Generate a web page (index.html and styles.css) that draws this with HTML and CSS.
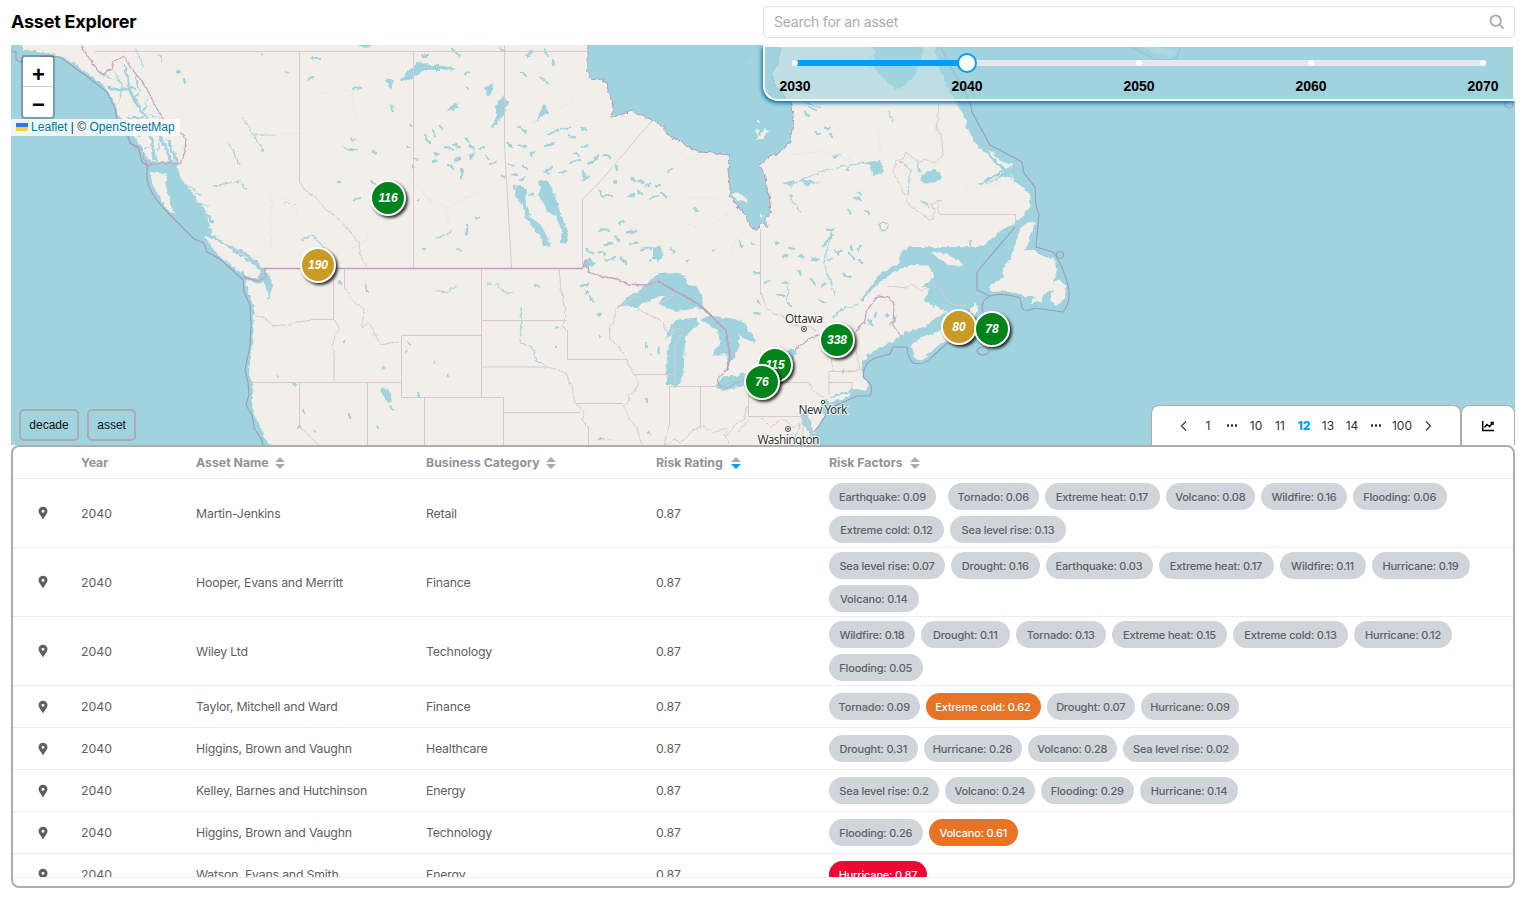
FILE: index.html
```html
<!DOCTYPE html>
<html lang="en">
<head>
<meta charset="utf-8">
<title>Asset Explorer</title>
<link rel="stylesheet" href="styles.css">
</head>
<body>
<svg class="defs" width="0" height="0" aria-hidden="true">
  <symbol id="pin" viewBox="0 0 10 14"><path fill-rule="evenodd" d="M5 .8a4.5 4.5 0 0 0-4.5 4.5C.5 8 3.300 9.600 4.200 12.300Q5 13.600 5.800 12.300C6.700 9.600 9.500 8 9.500 5.300A4.500 4.500 0 0 0 5 .8zM5 3.800a1.500 1.500 0 1 1 0 3a1.500 1.500 0 0 1 0-3z"/></symbol>
  <symbol id="sort" viewBox="0 0 10 12"><path class="up" d="M5 0L10 5H0z"/><path class="down" d="M5 12L0 7H10z"/></symbol>
</svg>
<main class="app">
  <header class="top">
    <h1 class="title">Asset Explorer</h1>
    <label class="search"><span>Search for an asset</span>
      <svg width="16" height="16" viewBox="0 0 16 16"><circle cx="6.700" cy="6.700" r="5.200"/><path d="M10.600 10.600L14.600 14.600"/></svg>
    </label>
  </header>
  <section class="map">
    <svg class="tiles" width="1504" height="400" viewBox="11 45 1504 400">
      <defs>
        <filter id="rough" x="0" y="0" width="1" height="1" color-interpolation-filters="sRGB"><feTurbulence type="fractalNoise" baseFrequency=".2" numOctaves="2" seed="4"/><feDisplacementMap in="SourceGraphic" scale="5" xChannelSelector="R" yChannelSelector="G"/></filter>
        <filter id="wiggle" x="0" y="0" width="1" height="1" color-interpolation-filters="sRGB"><feTurbulence type="fractalNoise" baseFrequency=".18" numOctaves="2" seed="9"/><feDisplacementMap in="SourceGraphic" scale="4" xChannelSelector="R" yChannelSelector="G"/></filter>
      </defs>
      <g class="land" filter="url(#rough)">
        <path d="M18 35L24 50L45 52L57 55L68 60L75 63L85 72L97 80L105 86L110 95L115 103L118 115L127 122L133 135L140 145L145 155L152 162L163 163L175 160L178 170L182 182L190 190L195 200L204 212L210 225L212 235L225 243L238 250L245 258L255 262L264 268L268 275L273 283L272 290L268 301L268 292L264 282L258 284L246 280L248 293L253 305L254 315L253 330L252 345L250 360L249 375L252 382L252 395L251 405L254 415L258 423L265 437L274 450H813L810 434L803 424L800 415L806 410L811 422L814 434L820 425L824 415L822 405L824 400L838 398L853 393L838 396L827 398L845 391L857 389L865 391L869 386L866 380L862 377L861 370L863 362L868 355L876 350L885 345L900 338L905 332L915 330L925 326L935 318L942 313L937 310L930 304L924 300L930 288L920 286L905 286L918 287L930 282L934 273L928 266L915 265L900 269L888 276L877 285L868 295L858 304L866 298L872 288L880 277L890 268L898 264L900 256L903 250L910 247L930 247L950 247L975 247L985 245L1000 231L1015 223L1024 215L1030 205L1031 195L1022 187L1013 180L1012 174L1000 178L985 184L1000 176L1012 168L1014 165L1000 161L992 152L978 148L973 138L967 128L965 115L957 106L953 98L946 85L938 65L932 35H928L921 58L915 75L905 85L895 90L884 78L875 70L873 35H785L778 60L772 75L775 85L785 97L792 105L794 125L791 140L783 150L765 160L759 164L764 172L766 183L769 195L771 212L766 218L768 228L762 222L757 230L751 228L745 215L738 207L730 196L730 185L728 170L729 155L715 153L698 152L688 147L680 141L670 137L663 127L652 120L640 115L632 111L620 115L611 117L613 108L610 95L604 79L591 80L587 72V35Z"/>
        <path d="M204 236L212 238L225 245L240 256L252 263L260 272L258 279L245 275L230 264L216 253Z M150 172L167 174L165 187L171 203L175 215L167 209L158 195L152 183Z M1020 230Q1026 220 1035 223L1030 238L1024 250L1034 250L1042 256L1054 259L1057 270L1053 282L1060 280L1066 286L1065 298L1056 306L1050 301L1053 290L1044 294L1042 302L1030 303L1036 296L1025 296L1010 291L990 292L990 286L1003 278L1002 268L1010 260Z M931 252L945 254L958 260L963 266L948 265L938 258Z M975 303L979 306L976 316L969 320L971 308Z M935 303L939 308L948 312L940 315L934 310Z M911 348L916 340L927 336L940 331L952 326L958 330L950 340L940 344L930 352L922 361L916 359Z M825 400L850 392L852 395L833 402Z"/>
        <path d="M731 195L738 192L746 198L747 202L738 201Z M755 131L759 127L758 137Z M757 119L761 123L757 122Z M765 128L769 132L762 139L757 139Z M749 65L757 53L750 63Z M754 190L756 196Z M761 213L765 216L761 217Z M126 80L130 95L124 90Z"/>
      </g>
      <g class="water" filter="url(#rough)">
        <path d="M617 308L628 297L640 290L650 281L660 273L675 272L683 274L688 285L698 288L703 299L702 310L695 308L685 310L675 311L663 305L658 303L667 295L655 297L645 303L637 308L628 305Z"/>
        <path d="M675 326L672 334L664 341L667 335L671 325L680 319L695 318L700 323L692 328L685 340L684 365L681 381L675 387L667 384L666 366L669 345Z"/>
        <path d="M700 319L713 316L735 319L745 323L750 332L757 342L748 341L738 334L740 345L734 358L728 365L726 354L712 356L715 349L720 344L718 331L708 324Z"/>
        <path d="M716 385L724 376L735 376L745 372H752V383L735 388L722 391Z M760 362L775 354L792 349L797 352L792 360L770 365Z"/>
        <path d="M538 180L548 180L555 195L560 212L565 225L568 235L566 243L561 243L562 230L556 216L548 212L543 202L537 195L540 190Z M517 185L527 190L526 202L531 218L541 225L549 240L550 246L543 246L540 235L530 224L524 208L516 198Z"/>
        <path d="M400 81L408 71L420 61L428 65L440 65L458 69L440 70L425 70L410 80Z M503 95L509 101L504 113L496 125L491 128L497 115L495 107Z M653 248L660 246L664 255L658 262L653 258Z M485 88L494 83L491 95L486 97Z M446 110L457 102L458 108L449 111Z M535 122L544 103L548 112L538 120L530 124Z M468 155L476 152L470 160Z M380 390L388 388L393 400L387 403Z M385 78L394 80L390 89Z M342 147L359 149L350 152Z M582 264L590 257L596 264L585 268Z M920 177L935 168L944 178L932 183L922 182Z M868 162L880 160L884 172L873 176Z M782 183L795 180L790 186Z M800 180L820 182L806 186Z M833 156L843 153L835 159Z M845 170L850 166L848 172Z"/>
      </g>
      <g class="streams" filter="url(#rough)">
        <path stroke-width="2.600" d="M125 65L130 92L142 112L155 130L165 145L172 165 M110 88L120 90L135 88 M128 118L142 118 M138 135L150 130L155 160 M168 140L178 165 M212 222L190 192L180 180 M240 250L258 265 M265 270L271 288 M883 272L862 300 M944 62L975 140L1012 178 M980 184L1010 168"/>
        <path stroke-width="1.200" d="M115 72L122 86L119 103 M136 76L140 92L132 98 M148 100L143 112L160 118 M120 128L130 135 M136 150L148 148 M162 125L158 150 M100 72L112 80 M136 50L142 62V68 M158 55L162 61 M175 180L195 190 M183 196L202 194 M188 205L208 205 M243 119L254 135L264 152 M254 135L276 135 M229 144L240 165 M213 186L240 181L246 190 M312 235L324 247L328 275 M285 203L296 204 M301 240L312 235 M437 292L449 291L455 287 M487 284L498 285L505 293L513 293 M521 308L522 328L520 342L533 348L535 358L545 366 M436 238L450 233L452 230 M823 263L833 228 M858 304L840 310L833 318 M825 265L835 295 M788 285L787 305 M798 100L820 108 M888 112L893 122 M790 185L820 172L850 165L875 162 M790 195L800 213 M900 160L910 170L908 195 M917 160L920 172 M921 200L930 208 M870 55L871 70 M800 424L796 437 M809 420L812 430"/>
        <path class="thin" d="M552 110L570 104L575 95 M413 182L430 200L447 208L480 190 M680 155L695 160L697 152 M688 198L718 198L732 195 M680 220L703 231L725 216L738 210 M730 260L735 240L750 230 M270 250L272 195L290 200L297 215 M318 94L350 90L357 120 M265 135L290 133L310 134 M350 250L365 240L372 225 M878 130L880 150 M965 190L1000 183 M790 155L820 150L850 160 M448 225L446 208"/>
        <path class="ponds" d="M313 57l6 2 M360 46l10-1 M308 79l5-1 M353 88l8 0 M285 72l2 0 M262 54l1 0 M392 106l1 5 M352 140l3 0 M373 152l4 1 M372 181l3 3 M338 182l2 0 M355 200l5-2 M184 79l1 4 M178 71l2 1 M422 56l6-1 M452 49l8 7 M500 48l4 4 M527 56l5-4 M545 50l3 7 M552 60l2 4 M465 75l4-4 M467 87l1 2 M540 76l8 8 M522 74l4 1 M425 135l5 8 M432 130l3 7 M440 126l2 3 M410 125l2 2 M407 147l1 0 M415 158l3 2 M412 166l2 1 M435 154l4 0 M445 147l8 3 M453 144l7 4 M448 165l5 4 M462 170v8 M432 162l4-2 M455 160l5-1 M480 149l4-2 M486 156l3 3 M490 164l5-2 M501 176l3 1 M510 164l4 2 M512 174l6 1 M523 166l4 3 M520 180l4-2 M470 145l5 5 M465 138l4 4 M507 143l5 4 M519 145l7 2 M520 127l5 5 M531 154l3-2 M545 146l8-2 M549 134l9-4 M562 129l7-2 M581 128l6 1 M569 136l5 2 M583 147l4-1 M575 153l3 3 M570 163l9-3 M582 180l7-3 M588 164l8-4 M595 159l3-4 M603 155l7 2 M560 172l5 0 M545 171l4 2 M525 210l2 10 M520 197l5 3 M530 195l3 0 M515 186l1 8 M548 170l4-3 M583 172l2 8 M605 196l7 0 M600 191l2 5 M616 166l1 3 M614 182l2 0 M632 179l3 1 M639 181l5 1 M646 186l3-1 M656 186l4-1 M629 196l5-1 M638 191l3 3 M650 198l8-3 M661 193l6 4 M668 171l3-1 M695 209l2 2 M476 217l4 1 M417 201l1 0 M467 225v9 M457 249l4 1 M423 249l2 0 M599 232l2-2 M603 229l5 2 M605 245l8-2 M614 236l5 4 M600 252l5 2 M587 250l6 3 M606 260l9-2 M621 258l5 5 M627 232l9-1 M630 244l8-2 M619 224l4-3 M641 250l9-2 M670 248l4 4 M648 262l3-2 M687 261l2 0 M713 250l2 0 M740 242l2 4 M752 243l3 1 M754 273l6 0 M755 313l5 1 M765 283l4-2 M783 282l5 1 M797 270l4 5 M811 280l4 4 M822 287l3-4 M843 274l7 3 M851 247l1 2 M858 250l3-4 M860 260l2 3 M850 254l4 5 M835 250l3 4 M812 260l7-1 M800 256l3 2 M778 295l5 1 M788 303l3 3 M757 300l4 4 M820 300l4 2 M832 235l-7 7 M823 248l2-4 M790 248l4 1 M775 243l3 0 M783 257l3-2 M810 108l6 2 M825 128l5 0 M815 132l5 2 M830 134l3 3 M805 113l4 3 M866 211l3 3 M855 198l5 1 M858 192l3 2 M848 210l3 4 M828 230l5 0 M828 260l3-1 M838 253l4-1 M581 286l7-2 M589 297l4 4 M597 315l4 0 M599 316l1-1 M586 292l2 0 M535 285l5 2 M556 329l2-1 M556 346v1 M600 336h1 M339 282l2 2 M366 285l1 5 M344 341h1 M277 376l1 1 M294 383l1 2 M304 411l1 2 M299 426l1 1 M314 431h1 M349 415v2 M377 428h1 M391 407l2 3 M383 368h1 M408 343l2 2 M406 352h1 M434 362v1 M448 375v1 M418 393l1 4 M658 347l1 6 M646 344v3 M651 355h1 M646 400v2 M649 432v1 M600 439l4 0 M610 440h1 M868 320l4 6 M875 313l1 4 M890 325l2-2 M887 314l1 1 M895 318v4 M843 370v3 M970 245l1-4"/>
        <circle class="ring" cx="883.500" cy="226" r="4.500"/>
      </g>
      <g class="borders" filter="url(#wiggle)">
        <path d="M299.500 182L307 192L318 199L325 209L340 220L352 234L359 243L361 258L368 268 M344.500 288L352 299L364 310L362 327L369 323L375 335L381 345L400 341 M255 316L266 318L272 326L290 324L311 320 M334 320L339 327L332 346L334 352 M559 269L561 290L566 315L563 325L567 332 M615 308L615 320L609 327L610 340L620 348L627 358L628 365L639 382L635 392L628 395L629 400L624 407L630 420L638 430L640 440L645 450 M637 309L650 316L662 320L667 332 M545 367L556 369L566 373L572 387L575 403L585 413L582 420L588 428 M663 450L668 430L670 423 M663 446L675 440L682 442L693 430L703 426L715 432L725 428L728 436L735 425L743 420L748 405 M725 435L732 450 M760.500 290L766 308L774 314L785 317L790 325L812 327L818 333 M761 418L771 428L781 418L795 428 M748 420L738 432 M808 382L814 391L824 398 M805 417L812 432 M831 355L833 371 M855 345L860 370L848 372 M912 284L922 292L930 284L942 290L947 302L963 306L977 291 M887 287L892 286L905 288L912 284"/>
        <path d="M939 103L937 128L942 140L943 155L936 163L928 160L918 162L906 152L902 160L897 160L893 172L903 190L909 205L920 213L932 220L935 210L930 205L942 200L936 208L941 214"/>
        <path class="state" d="M81 45L84 52L101 75L112 69L114 61L124 56L130 67L145 85L155 105L163 118V126L181 134L186 138L185 152L180 163H160L146 166L142 150L130 143L127 128 M583 268L586 261L588 272L600 276L617 279L628 284L645 285L658 281L698 304L707 312L713 318L726 330L730 358L727 370L718 379L720 386L726 388L745 379 M795 350L812 337L820 335 M856 330L864 323L867 310L878 296L890 298L894 305L893 325L902 338 M264 268L266 277L258 281L243 277"/>
      </g>
      <g class="borders" filter="url(#rough)">
        <path class="coast" d="M587 52L587 72L591 80L604 79L610 95L613 108L611 117L620 115L632 111L640 115L652 120L663 127L670 137L680 141L688 147L698 152L715 153L729 155L728 170L730 185L730 196L738 207L745 215L751 228L757 230L762 222L768 228 M782 46L778 60L772 75L775 85L785 97L792 105L794 125L791 140L783 150L765 160L759 164L764 172L766 183L769 195L771 212L766 218"/>
      </g>
      <g class="borders">
        <path d="M95 51.500H587 M299.500 52V182 M413.500 52V268 M504.500 45V145L511.500 268 M652.500 120L599 183L582.500 199V268 M333.500 269V320 M311 319.500H334 M334 350V382 M250 382.500H401 M299.500 383V427L319 445 M367.500 383V445 M344.500 269V288 M401.500 335.500H481.500V397.500H401.500Z M481.500 269V397.500H503.500V445 M481.500 320.500H567 M481.500 367H545 M424.500 397.500V445 M503.500 412.500H580 M588.500 426V445 M567.500 330V359.500H627 M575 403.500H623 M634 374.500H675 M669.500 386V425 M669 386.500H717 M700.500 386V427 M748.500 388V416.500H803V445 M780 382.500H808 M829 395V371.500H858 M829 382.500H852V392 M760.500 229V295 M941 214.500H1015.500V225 M658 304L670 298L676 289 M617 308L634 297H641 M675 382V345L684 330L675 328L667 336"/>
        <path class="maritime" d="M11 51L16 52V60L21 62L45 56L60 57L85 75L107 92L115 108L117 120L128 135L130 143L138 147L142 162L148 166C144 180 149 194 170 215L194 239L204 243L207 252L220 259L240 277L243 280L244 292L250 305L251 325L250 345L245 370L248 382L249 395L246 405L252 415L254 428L262 440L263 445 M941 47C948 68 969 90 972 112L990 145L1015 158L1022 162L1024 173L1035 187L1036 205L1039 215L1036 247L1053 252Q1062 263 1068 285Q1072 300 1063 312L1035 308Q1025 313 1022 308L1020 298Q1002 292 990 296Q978 302 984 315 M958 343L946 344L932 357Q924 366 913 363Q908 358 907 347L893 347L890 354L875 358Q861 365 864 378Q875 385 870 396L857 396L830 408L823 420L814 432 M1015 227L977 272V290L990 296"/>
        <path class="main" d="M264 268.500H583 M658 281L698 304L708 312L713 318L726 330L730 358L727 370 M243 277L258 281"/>
        <circle class="maritime" cx="1060" cy="255" r="3.500"/><ellipse class="maritime" cx="983" cy="351" rx="6" ry="4"/><circle class="maritime" cx="1509" cy="104" r="4"/><path class="maritime" d="M1128 45L1154 59L1170 60Q1181 58 1180 45"/><path class="shoal" d="M1148 46l28 7 M1150 49l20 6"/>
      </g>
      <g class="cities">
        <circle cx="804" cy="329" r="2.500"/><circle class="dot" cx="804" cy="329" r="1"/><circle cx="823" cy="402" r="1.700"/><circle cx="788" cy="429" r="2.500"/><circle class="dot" cx="788" cy="429" r="1"/>
        <text x="804" y="323" textLength="38">Ottawa</text><text x="823" y="414" textLength="49">New York</text><text x="788.500" y="444" textLength="62">Washington</text>
      </g>
    </svg>
    <div class="zoom"><span>+</span><span>−</span></div>
    <div class="credit"><svg width="12" height="8" viewBox="0 0 12 8"><path fill="#2b7ce0" d="M0 0h12v4H0z"/><path fill="#ffce3a" d="M0 4h12v4H0z"/></svg><a>Leaflet</a> | © <a>OpenStreetMap</a></div>
    <b class="marker" style="left:359px;top:135px">116</b>
    <b class="marker gold" style="left:289px;top:202px">190</b>
    <b class="marker" style="left:808px;top:277px">338</b>
    <b class="marker" style="left:746px;top:302px">115</b>
    <b class="marker" style="left:733px;top:319px">76</b>
    <b class="marker gold" style="left:930px;top:264px">80</b>
    <b class="marker" style="left:963px;top:266px">78</b>
    <div class="slider">
      <div class="track"><i class="fill"></i><i class="stop" style="left:0%"></i><i class="stop" style="left:50%"></i><i class="stop" style="left:75%"></i><i class="stop" style="left:100%"></i><i class="thumb"></i></div>
      <div class="years"><span>2030</span><span>2040</span><span>2050</span><span>2060</span><span>2070</span></div>
    </div>
    <div class="chips"><span>decade</span><span>asset</span></div>
    <div class="tabs">
      <nav class="pager"><svg width="24" height="12" viewBox="0 0 24 12"><path d="M14 1.500L9.500 6L14 10.500"/></svg><span>1</span><span class="dots"><i></i><i></i><i></i></span><span>10</span><span>11</span><span class="current">12</span><span>13</span><span>14</span><span class="dots"><i></i><i></i><i></i></span><span class="last">100</span><svg width="24" height="12" viewBox="0 0 24 12"><path d="M10 1.500L14.500 6L10 10.500"/></svg></nav>
      <div class="charttab"><svg width="14" height="12" viewBox="0 0 14 12"><path d="M1.700 1V10.500H13 M3.500 7.500L6 4.500L8.500 6.500L12 2.500 M9.500 2.500H12V5"/></svg></div>
    </div>
  </section>
  <section class="table">
    <div class="viewport">
    <div class="row head"><span></span><span>Year</span><span>Asset Name<svg><use href="#sort"/></svg></span><span>Business Category<svg><use href="#sort"/></svg></span><span>Risk Rating<svg class="desc"><use href="#sort"/></svg></span><span>Risk Factors<svg class="last"><use href="#sort"/></svg></span></div>
    <div class="row tall"><svg class="pin"><use href="#pin"/></svg><span>2040</span><span>Martin-Jenkins</span><span>Retail</span><span>0.87</span><div class="pills"><em class="quake wide">Earthquake: 0.09</em><em class="tornado">Tornado: 0.06</em><em class="heat">Extreme heat: 0.17</em><em class="volcano">Volcano: 0.08</em><em class="fire">Wildfire: 0.16</em><em class="flood">Flooding: 0.06</em><em class="cold">Extreme cold: 0.12</em><em class="sea">Sea level rise: 0.13</em></div></div>
    <div class="row tall"><svg class="pin"><use href="#pin"/></svg><span>2040</span><span>Hooper, Evans and Merritt</span><span>Finance</span><span>0.87</span><div class="pills"><em class="sea">Sea level rise: 0.07</em><em class="drought">Drought: 0.16</em><em class="quake">Earthquake: 0.03</em><em class="heat">Extreme heat: 0.17</em><em class="fire">Wildfire: 0.11</em><em class="storm">Hurricane: 0.19</em><em class="volcano">Volcano: 0.14</em></div></div>
    <div class="row tall"><svg class="pin"><use href="#pin"/></svg><span>2040</span><span>Wiley Ltd</span><span>Technology</span><span>0.87</span><div class="pills"><em class="fire">Wildfire: 0.18</em><em class="drought">Drought: 0.11</em><em class="tornado">Tornado: 0.13</em><em class="heat">Extreme heat: 0.15</em><em class="cold">Extreme cold: 0.13</em><em class="storm">Hurricane: 0.12</em><em class="flood">Flooding: 0.05</em></div></div>
    <div class="row"><svg class="pin"><use href="#pin"/></svg><span>2040</span><span>Taylor, Mitchell and Ward</span><span>Finance</span><span>0.87</span><div class="pills"><em class="tornado">Tornado: 0.09</em><em class="cold warn">Extreme cold: 0.62</em><em class="drought">Drought: 0.07</em><em class="storm">Hurricane: 0.09</em></div></div>
    <div class="row"><svg class="pin"><use href="#pin"/></svg><span>2040</span><span>Higgins, Brown and Vaughn</span><span>Healthcare</span><span>0.87</span><div class="pills"><em class="drought">Drought: 0.31</em><em class="storm">Hurricane: 0.26</em><em class="volcano">Volcano: 0.28</em><em class="sea">Sea level rise: 0.02</em></div></div>
    <div class="row"><svg class="pin"><use href="#pin"/></svg><span>2040</span><span>Kelley, Barnes and Hutchinson</span><span>Energy</span><span>0.87</span><div class="pills"><em class="short">Sea level rise: 0.2</em><em class="volcano">Volcano: 0.24</em><em class="flood">Flooding: 0.29</em><em class="storm">Hurricane: 0.14</em></div></div>
    <div class="row"><svg class="pin"><use href="#pin"/></svg><span>2040</span><span>Higgins, Brown and Vaughn</span><span>Technology</span><span>0.87</span><div class="pills"><em class="flood">Flooding: 0.26</em><em class="volcano warn">Volcano: 0.61</em></div></div>
    <div class="row"><svg class="pin"><use href="#pin"/></svg><span>2040</span><span>Watson, Evans and Smith</span><span>Energy</span><span>0.87</span><div class="pills"><em class="storm high">Hurricane: 0.87</em></div></div>
    </div>
  </section>
</main>
</body>
</html>
```
FILE: styles.css
```css
* { box-sizing: border-box; }
body { margin: 0; background: #fff; font-family: Inter, "Liberation Sans", sans-serif; overflow: hidden; }
.defs { position: absolute; }
.app { width: 1504px; margin-left: 11px; display: flex; flex-direction: column; }
.top { height: 45px; display: flex; justify-content: space-between; padding-top: 6px; }
.title { margin: 0; font-size: 18px; line-height: 31px; font-weight: 700; letter-spacing: -.23px; color: #000; }
.search { width: 752px; height: 32px; border: 1px solid #dcdfe6; border-radius: 4px; display: flex; align-items: center; justify-content: space-between; padding: 0 9px 1px 10px; font-size: 14px; letter-spacing: -.22px; color: #a8abb2; }
.search svg { fill: none; stroke: #a8abb2; stroke-width: 1.900; }
.map { position: relative; height: 400px; background: #a0d3de; overflow: hidden; }
.tiles { display: block; }
.land { fill: #f2efea; }
.water { fill: #a0d3de; }
.streams { fill: none; stroke: #a0d3de; stroke-linecap: round; stroke-linejoin: round; }
.thin { stroke: #e2ebe8; stroke-width: 1; }
.ponds { stroke-width: 2.300; }
.ring { stroke-width: 1.500; }
.borders { fill: none; stroke: #dbc8d2; stroke-width: 1; }
.state { stroke: #c6a7c0; stroke-width: 1.300; }
.main { stroke: #bf9fbb; stroke-width: 1.400; }
.coast { stroke: #ad9db8; stroke-width: 1; }
.maritime { stroke: #9a9dbb; stroke-width: 1.100; }
.shoal { stroke: #c2dfe3; stroke-width: 4; }
.cities { font: 12px "Noto Sans", sans-serif; text-anchor: middle; fill: #333; }
.cities text { stroke: rgba(255, 255, 255, .75); stroke-width: 2px; paint-order: stroke; }
.cities circle { fill: #fff; stroke: #444; stroke-width: 1; }
.cities .dot { fill: #444; stroke: none; }
.zoom { position: absolute; left: 10px; top: 10px; width: 34px; height: 64px; border: 2px solid rgba(0, 0, 0, .25); border-radius: 4px; background: #fff; background-clip: padding-box; font: bold 22px/30px "Liberation Sans", sans-serif; text-align: center; display: flex; flex-direction: column; padding: 1px 0 0 1px; }
.zoom span { height: 30px; }
.zoom span:first-child { height: 29px; margin-left: -1px; padding-left: 1px; border-bottom: 1px solid #ccc; line-height: 33px; }
.zoom span:last-child { line-height: 35px; }
.credit { position: absolute; left: 0; top: 74px; height: 17px; width: 169px; padding-left: 5px; background: rgba(255, 255, 255, .8); font: 12px/16px "Liberation Sans", sans-serif; letter-spacing: .04px; color: #333; white-space: nowrap; }
.credit a { color: #0078a8; }
.credit svg { margin-right: 3px; }
.marker { position: absolute; width: 36px; height: 36px; border: 2px solid #fff; border-radius: 50%; background: #00831b; color: #fff; font: italic bold 12px/33px "Liberation Sans", sans-serif; text-align: center; box-shadow: 2px 2px 3px rgba(0, 0, 0, .8); }
.gold { background: #c99a26; }
.slider { position: absolute; right: 0; top: 0; width: 752px; height: 56px; padding: 13px 30px 0; border: 2px solid #fff; border-bottom-left-radius: 15px; background: rgba(160, 211, 222, .62); box-shadow: -1px 2px 4px #006ba5; }
.track { position: relative; height: 6px; background: #e4e7ed; border-radius: 3px; }
.fill { position: absolute; left: 0; top: 0; width: 25%; height: 6px; background: #009dff; border-radius: 3px; }
.stop { position: absolute; top: 0; width: 6px; height: 6px; margin-left: -3px; border-radius: 50%; background: #fff; }
.thumb { position: absolute; left: 25%; top: -7px; width: 20px; height: 20px; margin-left: -10px; border: 2px solid #009dff; border-radius: 50%; background: #fff; }
.years { display: flex; justify-content: space-between; margin: 11px -20px 0; font: bold 14px/18px "Liberation Sans", sans-serif; color: #000; }
.years span { width: 40px; text-align: center; }
.chips { position: absolute; left: 8px; bottom: 4px; display: flex; gap: 8px; }
.chips span { height: 32px; border: 2px solid #afaaac; border-radius: 5px; padding: 0 8.300px; font: 12px/28px "Liberation Sans", sans-serif; color: #111; }
.tabs { position: absolute; right: 0; bottom: 0; display: flex; height: 40px; }
.pager { width: 310px; border: 1px solid #adadad; border-right-width: 1.500px; border-bottom: 0; border-radius: 8px 8px 0 0; background: #fff; display: flex; align-items: center; padding: 0 0 0 20px; font-size: 12px; color: #303133; }
.pager span { width: 24px; text-align: center; }
.pager .last { width: 28px; }
.pager svg { fill: none; stroke: #303133; stroke-width: 1.100; }
.pager .current { color: #009dff; font-weight: 800; }
.pager .dots { display: flex; justify-content: center; gap: 1.500px; }
.dots i { width: 2.600px; height: 2.600px; border-radius: 50%; background: #303133; }
.charttab { width: 54px; border: 1px solid #adadad; border-left-width: 1.500px; border-bottom: 0; border-radius: 8px 8px 0 0; background: #fff; display: grid; place-items: center; }
.charttab svg { fill: none; stroke: #000; stroke-width: 1.500; }
.table { height: 443px; border: 2px solid #adadad; border-radius: 8px; background: #fff; overflow: hidden; }
.viewport { height: 431px; overflow: hidden; border-bottom: 1px solid #ebeef5; }
.row { height: 42px; display: grid; grid-template-columns: 68px 115px 230px 230px 173px 1fr; align-items: center; border-bottom: 1px solid #e8edf2; font-size: 12.300px; color: #5d5f64; letter-spacing: -.19px; }
.row > span:nth-child(2) { letter-spacing: 0; }
.row > span:nth-child(5) { letter-spacing: -.1px; }
.tall { height: 69px; }
.row.head { height: 32px; font-weight: 650; color: #909399; }
.head > span, .head > span:nth-child(n) { display: flex; align-items: center; letter-spacing: 0; }
.head svg { width: 10px; height: 12px; margin-left: 6px; fill: #a8abb2; }
.head .last { margin-left: 7px; }
.head .desc { margin-left: 8px; --arrow: #009dff; }
.down { fill: var(--arrow, #a8abb2); }
.pin { width: 10px; height: 14px; margin-left: 25px; fill: #5d5f64; }
.pills { display: flex; flex-wrap: wrap; gap: 6px; }
.pills em { height: 27px; border-radius: 14px; background: #d0d4db; color: #606266; font: 450 11px/28px Inter, sans-serif; text-align: center; white-space: nowrap; }
.pills .quake { width: 107px; }
.pills .tornado { width: 90.500px; }
.pills .heat { width: 115px; }
.pills .volcano { width: 89.500px; }
.pills .fire { width: 86px; }
.pills .flood { width: 93.500px; }
.pills .cold { width: 115px; }
.pills .sea { width: 116px; }
.pills .short { width: 110px; }
.pills .drought { width: 88.500px; }
.pills .storm { width: 98px; }
.pills .wide { margin-right: 6px; }
.pills .warn { background: #e87324; color: #fff; font-weight: 500; }
.pills .high { background: #ec0932; color: #fff; font-weight: 500; }
```
